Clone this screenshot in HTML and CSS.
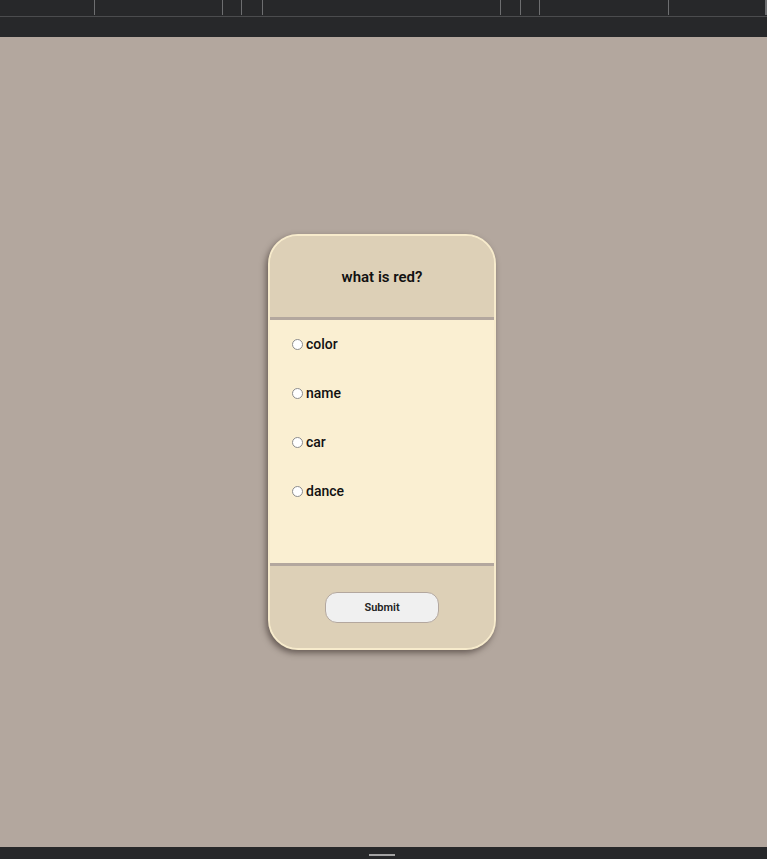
FILE: index.html
```html
<!DOCTYPE html>
<html>
<head>
<meta charset="utf-8">
<link rel="stylesheet" href="styles.css">
</head>
<body>
<div class="topbar">
  <div class="ticks">
    <span class="seg" style="width:95px"></span>
    <span class="seg" style="width:128px"></span>
    <span class="seg" style="width:19px"></span>
    <span class="seg" style="width:21px"></span>
    <span class="seg" style="width:238px"></span>
    <span class="seg" style="width:20px"></span>
    <span class="seg" style="width:19px"></span>
    <span class="seg" style="width:129px"></span>
    <span class="seg" style="width:97px"></span>
    <span class="seg" style="width:1px"></span>
  </div>
  <div class="strip"></div>
</div>
<main class="stage">
  <form class="card">
    <header class="card-head">
      <h1 class="question">what is red?</h1>
    </header>
    <div class="card-body">
      <label class="option"><input type="radio" name="a" class="radio"><span>color</span></label>
      <label class="option"><input type="radio" name="a" class="radio"><span>name</span></label>
      <label class="option"><input type="radio" name="a" class="radio"><span>car</span></label>
      <label class="option"><input type="radio" name="a" class="radio"><span>dance</span></label>
    </div>
    <footer class="card-foot">
      <button type="button" class="submit">Submit</button>
    </footer>
  </form>
</main>
<div class="bottombar"><span class="handle"></span></div>
</body>
</html>
```
FILE: styles.css
```css
html, body {
  margin: 0;
  padding: 0;
  height: 100%;
}
body {
  display: flex;
  flex-direction: column;
  background: #b3a79e;
  font-family: Roboto, "Liberation Sans", sans-serif;
  overflow: hidden;
}
.topbar {
  flex: 0 0 37px;
  background: #27282a;
  display: flex;
  flex-direction: column;
}
.ticks {
  display: flex;
  height: 16px;
  border-bottom: 1px solid #4b4c4e;
}
.seg {
  flex: none;
  height: 15px;
  box-sizing: border-box;
  border-right: 1px solid #6d6e70;
}
.seg:last-child {
  border-right: none;
  background: #6d6e70;
}
.strip {
  flex: 1;
}
.stage {
  flex: 1;
  display: flex;
  align-items: center;
  justify-content: center;
  padding-right: 3px;
}
.card {
  width: 228px;
  height: 416px;
  box-sizing: border-box;
  border: 2px solid #f7ebcc;
  border-radius: 30px;
  overflow: hidden;
  display: flex;
  flex-direction: column;
  background: #ddd0b7;
  box-shadow: -2px 3px 6px rgba(40, 30, 25, 0.55);
}
.card-head {
  flex: 0 0 81px;
  display: flex;
  align-items: center;
  justify-content: center;
  background: #ddd0b7;
  border-bottom: 3px solid #b3a79e;
}
.question {
  margin: 0;
  font-size: 15px;
  font-weight: 600;
  color: #111;
}
.card-body {
  flex: 0 0 246px;
  background: #faefd2;
  border-bottom: 3px solid #b3a79e;
  display: flex;
  flex-direction: column;
  gap: 31px;
  padding: 15px 0 0 22px;
  box-sizing: border-box;
}
.option {
  display: flex;
  align-items: center;
  gap: 3px;
  font-size: 14px;
  font-weight: 500;
  color: #111;
  height: 18px;
}
.radio {
  appearance: none;
  -webkit-appearance: none;
  margin: 0;
  width: 11px;
  height: 11px;
  border: 1px solid #8c8c8c;
  border-radius: 50%;
  background: #fff;
  box-sizing: border-box;
}
.card-foot {
  flex: 1;
  display: flex;
  align-items: center;
  justify-content: center;
  background: #ddd0b7;
}
.submit {
  width: 114px;
  height: 31px;
  border: 1px solid #b3a79e;
  border-radius: 12px;
  background: #f0f0f0;
  font-family: Roboto, "Liberation Sans", sans-serif;
  font-size: 11px;
  font-weight: 600;
  color: #222;
}
.bottombar {
  flex: 0 0 12px;
  background: #27282a;
  display: flex;
  justify-content: center;
  align-items: flex-end;
  padding-bottom: 3px;
  box-sizing: border-box;
}
.handle {
  width: 26px;
  height: 2px;
  background: #a3a3a3;
  margin-right: 3px;
}
```
